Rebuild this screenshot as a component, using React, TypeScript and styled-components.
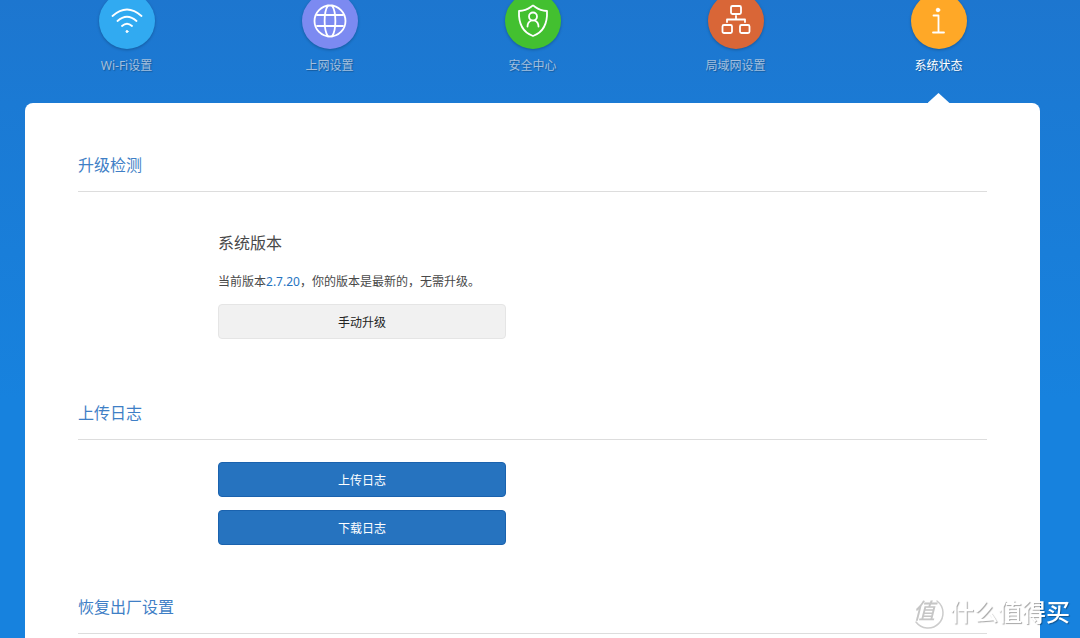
import React from 'react';
import styled, { createGlobalStyle } from 'styled-components';

const GlobalStyle = createGlobalStyle`
  * { box-sizing: border-box; }
  body {
    margin: 0;
    background: #1782de;
    color: #484848;
    font-family: 'Noto Sans', 'Noto Sans CJK SC', sans-serif;
    font-size: 12px;
    line-height: 18px;
  }
  h2, h3, p { margin: 0; font-weight: 400; }
`;

const Page = styled.div`
  display: flex;
  flex-direction: column;
  min-height: 100vh;
  padding: 0 40px 0 25px;
  overflow: hidden;
  background: linear-gradient(#1d76cf, #1b7ad4 103px, #1782de 400px);
`;

const Nav = styled.nav`
  display: grid;
  grid-template-columns: repeat(5, 1fr);
  height: 110px;
  margin-top: -7px;
`;

const NavLink = styled.a<{ $active?: boolean }>`
  display: flex;
  flex-direction: column;
  align-items: center;
  gap: 8px;
  color: ${(p) => (p.$active ? '#ffffff' : '#a3bfdd')};
  text-decoration: none;
  text-shadow: 1px 1px 1px rgba(0, 0, 0, 0.25);

  &::after {
    content: '';
    display: ${(p) => (p.$active ? 'block' : 'none')};
    width: 22px;
    height: 10px;
    margin-top: auto;
    background: #ffffff;
    clip-path: polygon(50% 0, 100% 100%, 0 100%);
  }
`;

const Disc = styled.span<{ $color: string }>`
  display: grid;
  place-items: center;
  width: 56px;
  height: 56px;
  border-radius: 50%;
  background: ${(p) => p.$color};
  box-shadow: 0 1px 3px rgba(0, 0, 0, 0.25);
`;

const Icon = styled.svg`
  width: 34px;
  height: 34px;
  fill: none;
  stroke: #ffffff;
  stroke-width: 1.8;
  stroke-linecap: round;
  stroke-linejoin: round;
`;

const Card = styled.main`
  flex: 1;
  padding: 50px 53px 0;
  border-radius: 8px 8px 0 0;
  background: #ffffff;
`;

const SectionTitle = styled.h2`
  padding-bottom: 14px;
  border-bottom: 1px solid #dddddd;
  color: #3f7fc6;
  font-size: 16px;
  line-height: 24px;
`;

const SectionBody = styled.div<{ $roomy?: boolean }>`
  display: flex;
  flex-direction: column;
  align-items: flex-start;
  gap: 13px;
  padding: ${(p) => (p.$roomy ? '39px 0 62px 140px' : '22px 0 50px 140px')};
`;

const Subtitle = styled.h3`
  margin-bottom: 5px;
  font-size: 16px;
  line-height: 24px;
`;

const Version = styled.span`
  color: #2673bf;
`;

const Button = styled.button<{ $primary?: boolean }>`
  width: 100%;
  max-width: 288px;
  height: 35px;
  padding: 2px 0 0;
  border: 1px solid ${(p) => (p.$primary ? '#1a62ae' : '#e5e5e5')};
  border-radius: 4px;
  background: ${(p) => (p.$primary ? '#2673bf' : '#f1f1f1')};
  color: ${(p) => (p.$primary ? '#ffffff' : '#222222')};
  font: inherit;
`;

const Watermark = styled.div`
  position: fixed;
  right: 10px;
  bottom: 8px;
  display: flex;
  align-items: center;
  gap: 8px;
  color: #ffffff;
  font-size: 24px;
  font-weight: 500;
  line-height: 36px;
  text-shadow: 1px 1px 1px rgba(0, 0, 0, 0.35);
  pointer-events: none;
`;

const Seal = styled.svg`
  width: 34px;
  height: 36px;
  overflow: visible;
  text-shadow: none;

  text {
    fill: #c6c6c6;
    font-size: 22px;
    font-style: italic;
  }
`;

const WifiIcon = () => (
  <Icon viewBox="0 0 34 34">
    <path d="M2.500 12Q17-1 31.500 12M7.500 17Q17 8.500 26.500 17M12 22Q17 17.500 22 22" />
    <circle cx="17" cy="27.500" r="1" fill="#ffffff" strokeWidth="1" />
  </Icon>
);

const GlobeIcon = () => (
  <Icon viewBox="0 0 34 34">
    <circle cx="17" cy="17" r="15.500" />
    <path d="M4 11H30M4 22H30M15 1.500C10.500 8 10.500 26 15 32.500M19 1.500C23.500 8 23.500 26 19 32.500" />
  </Icon>
);

const ShieldIcon = () => (
  <Icon viewBox="0 0 34 34">
    <path d="M17 1.500C20 3 22 6.500 31 7C31.500 18 28 28 17 32C6 28 2.500 18 3 7C12 6.500 14 3 17 1.500Z" />
    <circle cx="17" cy="12.500" r="4" />
    <path d="M11.500 22.500C11.500 19.500 13 17.500 15.500 16.500M22.500 22.500C22.500 19.500 21 17.500 18.500 16.500" />
  </Icon>
);

const NetworkIcon = () => (
  <Icon viewBox="0 0 34 34">
    <rect x="12" y="2" width="10" height="8" rx="1.500" />
    <rect x="3.500" y="21" width="9.500" height="8" rx="1.500" />
    <rect x="21" y="21" width="9.500" height="8" rx="1.500" />
    <path d="M17 12V15M8 18V15.500H26V18" />
  </Icon>
);

const InfoIcon = () => (
  <Icon viewBox="0 0 34 34">
    <circle cx="16" cy="6" r="1.800" fill="#ffffff" strokeWidth="1" />
    <path d="M11.500 11.500H16.500V28.500M11 28.500H22" />
  </Icon>
);

const tabs = [
  { label: 'Wi-Fi设置', color: '#31aaf1', Glyph: WifiIcon },
  { label: '上网设置', color: '#7c8af1', Glyph: GlobeIcon },
  { label: '安全中心', color: '#43c030', Glyph: ShieldIcon },
  { label: '局域网设置', color: '#d96637', Glyph: NetworkIcon },
  { label: '系统状态', color: '#ffa827', Glyph: InfoIcon, active: true },
];

export default function App() {
  return (
    <>
      <GlobalStyle />
      <Page lang="zh-CN">
        <Nav>
          {tabs.map(({ label, color, Glyph, active }) => (
            <NavLink key={label} href="#" $active={active} aria-current={active ? 'page' : undefined}>
              <Disc $color={color}>
                <Glyph />
              </Disc>
              {label}
            </NavLink>
          ))}
        </Nav>
        <Card>
          <section>
            <SectionTitle>升级检测</SectionTitle>
            <SectionBody $roomy>
              <Subtitle>系统版本</Subtitle>
              <p>
                当前版本<Version>2.7.20</Version>，你的版本是最新的，无需升级。
              </p>
              <Button type="button">手动升级</Button>
            </SectionBody>
          </section>
          <section>
            <SectionTitle>上传日志</SectionTitle>
            <SectionBody>
              <Button type="button" $primary>上传日志</Button>
              <Button type="button" $primary>下载日志</Button>
            </SectionBody>
          </section>
          <section>
            <SectionTitle>恢复出厂设置</SectionTitle>
          </section>
        </Card>
      </Page>
      <Watermark lang="zh-CN">
        <Seal viewBox="0 0 34 36">
          <path d="M29 7A15 15 0 1 1 8 28" fill="none" stroke="#cccccc" strokeWidth="1.500" strokeLinecap="round" />
          <text x="5" y="25">值</text>
        </Seal>
        什么值得买
      </Watermark>
    </>
  );
}
